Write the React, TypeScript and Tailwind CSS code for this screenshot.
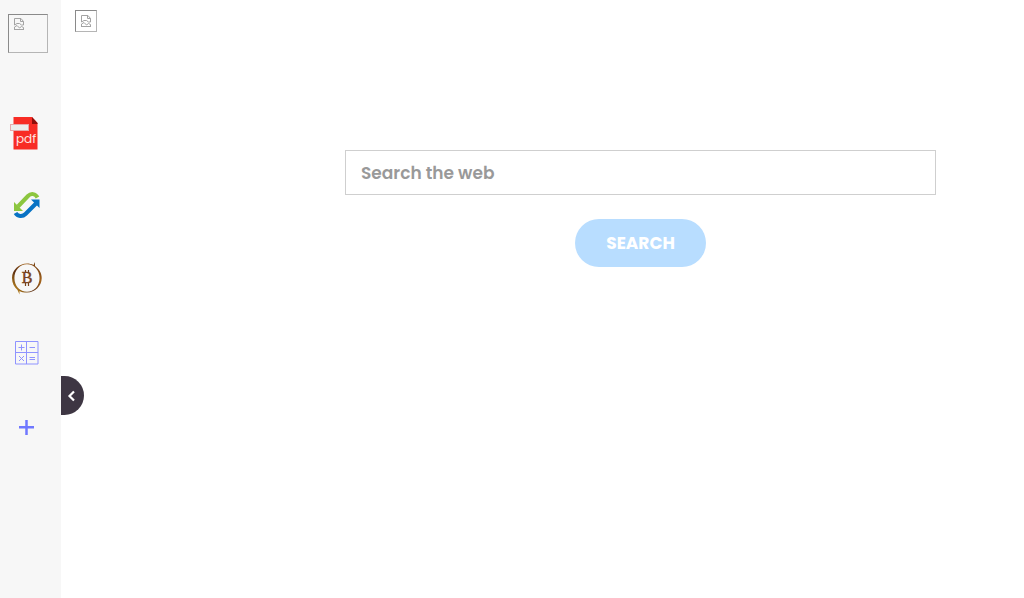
import type { ReactNode } from 'react';

function BrokenImage() {
  return (
    <svg width="12" height="14" viewBox="0 0 12 14" fill="none" stroke="#a3a3a3" aria-hidden="true">
      <path d="M1.5 8V1.5H8L10.5 4.5V8H8.5L6.5 6.5H4L1.5 8" />
      <path d="M7.5 1.5V4.5H10.5" />
      <path d="M1 12.5H11M1.5 12.5V10L4 8.5L6.5 11L8.5 9.5L10.5 10.5V12.5" />
    </svg>
  );
}

function PdfIcon() {
  return (
    <svg width="40" height="40" viewBox="0 0 40 40" aria-hidden="true">
      <path d="M6.5 6H25L30.5 12V38.5H6.5Z" fill="#f82c25" />
      <path d="M25 6L30.5 12V13H25Z" fill="#8e0f0b" />
      <rect x="3.5" y="13.5" width="18" height="6" fill="#ececec" stroke="#e6a9ac" />
      <text x="19" y="32" textAnchor="middle" fill="#ffe4e2" fontSize="12" fontFamily="Poppins, Lato, sans-serif">
        pdf
      </text>
    </svg>
  );
}

function ConvertIcon() {
  return (
    <svg width="40" height="40" viewBox="0 0 40 40" fill="none" strokeWidth="4" aria-hidden="true">
      <path d="M30.5 12.5C28.5 8.5 24 8 21 11L11 21.5" stroke="#8cc63f" />
      <path d="M7 17V26H16Z" fill="#8cc63f" />
      <path d="M8.5 28C10.5 31.5 15.5 32 18.5 29L29 18.5" stroke="#0873c4" />
      <path d="M32.5 23V14.5H24Z" fill="#0873c4" />
    </svg>
  );
}

function BitcoinIcon() {
  return (
    <svg width="40" height="40" viewBox="0 0 40 40" aria-hidden="true">
      <defs>
        <linearGradient id="ring" x1="0" y1="1" x2="1" y2="0">
          <stop offset="0" stopColor="#e0a928" />
          <stop offset="0.4" stopColor="#5a2c10" />
          <stop offset="0.7" stopColor="#a5651c" />
          <stop offset="1" stopColor="#4b210e" />
        </linearGradient>
      </defs>
      <path
        fill="url(#ring)"
        fillRule="evenodd"
        d="M28 3V7C32 10 34.7 14 34.7 19C34.7 27 28 33.5 20 33.5C17 33.5 14 33 12.5 32V35.5L10.5 31C7 28 5 24 5 19C5 11 12 4.5 20 4.5C22.5 4.5 24.5 5 26.5 6ZM20 5.2C13 5.2 7.4 11 7.4 19C7.4 27 13 32.8 20 32.8C27 32.8 32.5 27 32.5 19C32.5 11 27 5.2 20 5.2Z"
      />
      <path d="M18.5 11V14M21.5 11V14M18.5 24V27M21.5 24V27" stroke="#7a431b" strokeWidth="1.2" />
      <text
        x="20"
        y="24"
        textAnchor="middle"
        fill="#7a431b"
        stroke="#7a431b"
        strokeWidth="0.5"
        fontSize="16"
        fontFamily="'Liberation Serif', serif"
      >
        B
      </text>
    </svg>
  );
}

function CalculatorIcon() {
  return (
    <svg width="40" height="40" viewBox="0 0 40 40" fill="none" stroke="#8f93ff" aria-hidden="true">
      <path d="M8.5 8.5H31V31H8.5ZM19.5 8.5V31M8.5 19.5H31" />
      <path d="M11.5 14.5H17.5M14.5 11.5V17.5M22.5 14.5H28M12 23L17 28M17 23L12 28M22.5 24.5H28M22.5 26.5H28" />
    </svg>
  );
}

function PlusIcon() {
  return (
    <svg width="40" height="40" viewBox="0 0 40 40" stroke="#7078ff" strokeWidth="2.5" aria-hidden="true">
      <path d="M12 20.2H27M19.5 13V28" />
    </svg>
  );
}

function ArrowIcon() {
  return (
    <svg width="12" height="12" viewBox="0 0 12 12" fill="none" stroke="currentColor" strokeWidth="2.2" aria-hidden="true">
      <path d="M8 1.5L3.5 6L8 10.5" />
    </svg>
  );
}

const shortcuts: { label: string; icon: ReactNode }[] = [
  { label: 'PDF tools', icon: <PdfIcon /> },
  { label: 'Converter', icon: <ConvertIcon /> },
  { label: 'Bitcoin', icon: <BitcoinIcon /> },
  { label: 'Calculator', icon: <CalculatorIcon /> },
];

function Sidebar() {
  return (
    <aside className="relative w-[61px] shrink-0 bg-[#f7f7f7]">
      <a
        href="#"
        aria-label="Home"
        className="ml-2 mt-[14px] flex h-[39px] w-10 border border-b-[#b5b5b5] border-l-[#8a8a8a] border-r-[#b5b5b5] border-t-[#8a8a8a] pl-1 pt-[2px]"
      >
        <BrokenImage />
      </a>
      <nav className="mt-[41px] flex w-[54px] flex-col">
        {shortcuts.map((item) => (
          <a key={item.label} href="#" aria-label={item.label} className="flex h-[74px] items-center justify-center">
            {item.icon}
          </a>
        ))}
        <button type="button" aria-label="Add shortcut" className="flex h-[74px] items-center justify-center">
          <PlusIcon />
        </button>
      </nav>
      <button
        type="button"
        aria-label="Collapse sidebar"
        className="absolute left-full top-[376px] flex h-[39px] w-[23px] items-center justify-center rounded-r-full bg-[#3e3643] pr-px text-white"
      >
        <ArrowIcon />
      </button>
    </aside>
  );
}

export default function App() {
  return (
    <div className="flex min-h-screen bg-white font-['Poppins','Inter',sans-serif]">
      <Sidebar />
      <main className="min-w-0 flex-1">
        <header className="px-[14px] pt-[10px]">
          <a
            href="#"
            aria-label="Logo"
            className="flex h-[22px] w-[22px] items-center justify-center border border-b-[#b5b5b5] border-l-[#8a8a8a] border-r-[#b5b5b5] border-t-[#8a8a8a]"
          >
            <BrokenImage />
          </a>
        </header>
        <form className="ml-[284px] mr-[88px] mt-[118px] flex flex-col items-center" onSubmit={(e) => e.preventDefault()}>
          <input
            type="text"
            aria-label="Search the web"
            placeholder="Search the web"
            className="h-[45px] w-full border border-[#cfcfcf] px-[15px] text-[17px] font-semibold text-[#444] outline-none placeholder:text-[#999]"
          />
          <button
            type="submit"
            className="mt-6 h-12 rounded-full bg-[#b8ddff] px-[31px] pt-[2px] text-[17px] font-bold text-white"
          >
            SEARCH
          </button>
        </form>
      </main>
    </div>
  );
}
